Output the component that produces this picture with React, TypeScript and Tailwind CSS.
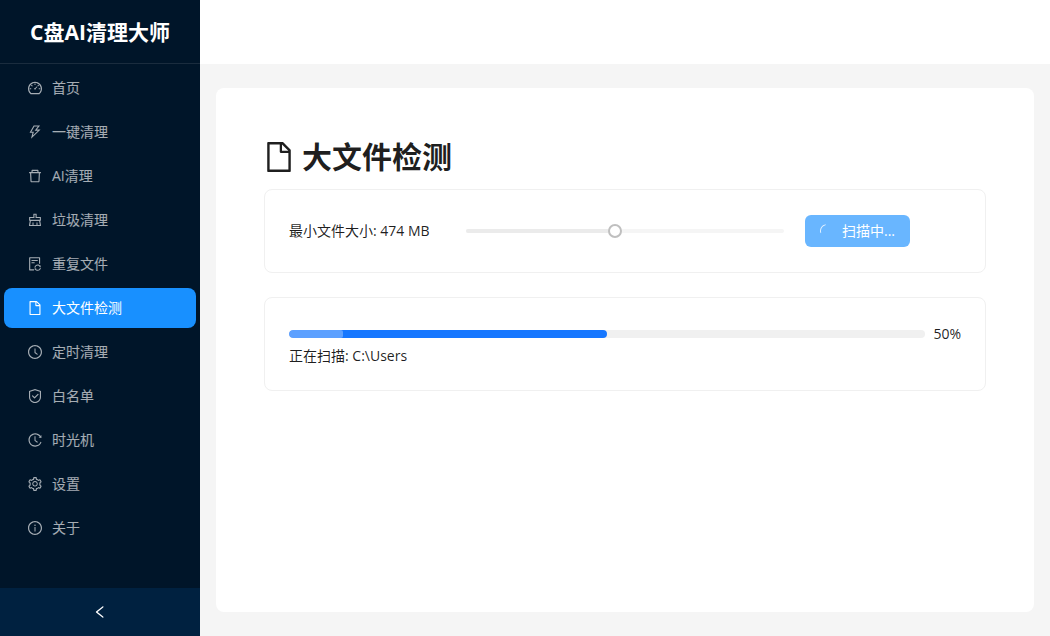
import { useState } from "react";
import {
  AiOutlineClear,
  AiOutlineClockCircle,
  AiOutlineDashboard,
  AiOutlineDelete,
  AiOutlineFile,
  AiOutlineFileSync,
  AiOutlineHistory,
  AiOutlineInfoCircle,
  AiOutlineLeft,
  AiOutlineLoading,
  AiOutlineSafety,
  AiOutlineSetting,
  AiOutlineThunderbolt,
} from "react-icons/ai";
import { clsx } from "clsx";

const MIN_SIZE = 10;
const MAX_SIZE = 1000;

// trims the empty margin around the glyphs
const ICON_BOX = "64 64 896 896";

const menuItems = [
  { key: "home", label: "首页", icon: AiOutlineDashboard },
  { key: "one-click", label: "一键清理", icon: AiOutlineThunderbolt },
  { key: "ai", label: "AI清理", icon: AiOutlineDelete },
  { key: "junk", label: "垃圾清理", icon: AiOutlineClear },
  { key: "duplicates", label: "重复文件", icon: AiOutlineFileSync },
  { key: "large-files", label: "大文件检测", icon: AiOutlineFile },
  { key: "schedule", label: "定时清理", icon: AiOutlineClockCircle },
  { key: "whitelist", label: "白名单", icon: AiOutlineSafety },
  { key: "time-machine", label: "时光机", icon: AiOutlineHistory },
  { key: "settings", label: "设置", icon: AiOutlineSetting },
  { key: "about", label: "关于", icon: AiOutlineInfoCircle },
];

function Sidebar() {
  return (
    <aside className="flex w-50 shrink-0 flex-col bg-[#001529]">
      <div className="flex h-16 items-center justify-center border-b border-white/10 text-[21px] font-bold text-white">
        C盘AI清理大师
      </div>
      <nav className="flex flex-1 flex-col gap-1 p-1">
        {menuItems.map(({ key, label, icon: Icon }) => (
          <a
            key={key}
            href={`#${key}`}
            className={clsx(
              "flex h-10 items-center gap-2.5 rounded-lg pl-6",
              key === "large-files" ? "bg-[#1890ff] text-white" : "text-white/65 hover:text-white"
            )}
          >
            <Icon viewBox={ICON_BOX} className="size-3.5" />
            <span>{label}</span>
          </a>
        ))}
      </nav>
      <button aria-label="收起菜单" className="flex h-12 items-center justify-center bg-[#002140] text-white">
        <AiOutlineLeft viewBox={ICON_BOX} className="size-3.5" />
      </button>
    </aside>
  );
}

function SizeFilter() {
  const [size, setSize] = useState(474);
  const percent = ((size - MIN_SIZE) / (MAX_SIZE - MIN_SIZE)) * 100;

  return (
    <section className="rounded-lg border border-[#f0f0f0] p-6">
      <div className="grid min-h-[34px] grid-cols-4 items-center gap-4">
        <label htmlFor="min-size">最小文件大小: {size} MB</label>
        <div className="relative col-span-2 mx-[5px] h-1 rounded-xs bg-[#f5f5f5]">
          <div className="h-1 rounded-xs bg-[#ebebeb]" style={{ width: `${percent}%` }} />
          <input
            id="min-size"
            type="range"
            min={MIN_SIZE}
            max={MAX_SIZE}
            value={size}
            disabled
            onChange={(e) => setSize(Number(e.target.value))}
            className="absolute -inset-x-[7px] -top-[5px] h-3.5 appearance-none bg-transparent [&::-webkit-slider-thumb]:size-3.5 [&::-webkit-slider-thumb]:appearance-none [&::-webkit-slider-thumb]:rounded-full [&::-webkit-slider-thumb]:border-2 [&::-webkit-slider-thumb]:border-solid [&::-webkit-slider-thumb]:border-[#bfbfbf] [&::-webkit-slider-thumb]:bg-white"
          />
        </div>
        <button className="flex h-8 items-center gap-2 justify-self-start rounded-md bg-[#69b6ff] px-[15px] text-white">
          <AiOutlineLoading className="size-3.5 -rotate-105 opacity-80" />
          <span>扫描中...</span>
        </button>
      </div>
    </section>
  );
}

function ScanProgress({ percent, path }: { percent: number; path: string }) {
  return (
    <section className="mt-6 rounded-lg border border-[#f0f0f0] p-6">
      <div className="flex h-6 items-center gap-2">
        <div
          role="progressbar"
          aria-label="扫描进度"
          aria-valuenow={percent}
          className="h-2 flex-1 overflow-hidden rounded-full bg-[#f0f0f0]"
        >
          <div className="h-2 overflow-hidden rounded-full bg-[#1677ff]" style={{ width: `${percent}%` }}>
            <div className="h-2 w-[17%] rounded-r-xs bg-white/30" />
          </div>
        </div>
        <span>{percent}%</span>
      </div>
      <p className="leading-5">正在扫描: {path}</p>
    </section>
  );
}

export default function App() {
  return (
    <div className="flex min-h-screen bg-[#f5f5f5] font-['Open_Sans','Noto_Sans_CJK_SC',sans-serif] text-sm/[22px] text-black/88">
      <Sidebar />
      <div className="flex min-w-0 flex-1 flex-col">
        <header className="h-16 bg-white" />
        <main className="mx-4 my-6 flex-1 rounded-lg bg-white p-12">
          <h2 className="mb-3 flex items-center gap-2 text-3xl/[41px] font-bold">
            <AiOutlineFile viewBox={ICON_BOX} className="size-[30px]" />
            大文件检测
          </h2>
          <SizeFilter />
          <ScanProgress percent={50} path="C:\Users" />
        </main>
      </div>
    </div>
  );
}
